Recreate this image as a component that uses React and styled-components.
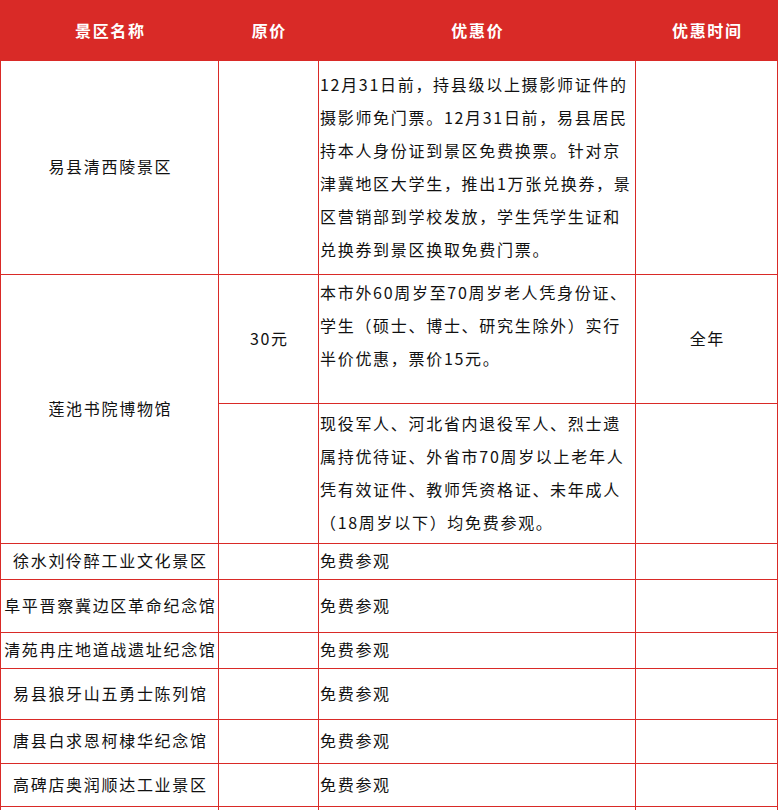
import React from "react";
import styled, { createGlobalStyle } from "styled-components";

const RED = "#d92a27";

const GlobalStyle = createGlobalStyle`
  body {
    margin: 0;
    background: #fff;
    font-family: "Noto Sans CJK SC", "Noto Sans", sans-serif;
  }
`

const Table = styled.div`
  width: 778px;
  display: grid;
  grid-template-columns: 217px 99px 316px 141px;
  grid-template-rows: 59px 213px 128px 139px 35px 52px 35px 50px 43px 42px 40px;
  gap: 1px;
  padding: 1px;
  box-sizing: border-box;
  background: ${RED};
`

const HeadCell = styled.div`
  background: ${RED};
  color: #fff;
  font-size: 16px;
  font-weight: 700;
  letter-spacing: 1.7px;
  display: flex;
  align-items: center;
  justify-content: center;
  padding: 0 0 2px 1.7px;
`

const Cell = styled.div`
  background: #fff;
  color: #111;
  font-size: 16px;
  letter-spacing: 1.7px;
  line-height: 33px;
  display: flex;
  flex-direction: column;
  justify-content: ${(p) => (p.$top ? "flex-start" : "center")};
  align-items: ${(p) => (p.$left ? "flex-start" : "center")};
  padding: ${(p) => (p.$top ? "1px 0 0 1px" : p.$left ? "0 0 2px 1px" : "0 0 2px 1.7px")};
  grid-row: ${(p) => (p.$span ? `span ${p.$span}` : "auto")};
  white-space: nowrap;
`

const Line = styled.span`
  display: block;
`

const heads = ["景区名称", "原价", "优惠价", "优惠时间"];

const Text = ({ lines, ...rest }) => (
  <Cell $left {...rest}>
    {lines.map((l) => (
      <Line key={l}>{l}</Line>
    ))}
  </Cell>
)

const freeSites = [
  "徐水刘伶醉工业文化景区",
  "阜平晋察冀边区革命纪念馆",
  "清苑冉庄地道战遗址纪念馆",
  "易县狼牙山五勇士陈列馆",
  "唐县白求恩柯棣华纪念馆",
  "高碑店奥润顺达工业景区",
];

const App = () => (
  <>
    <GlobalStyle />
    <Table>
      {heads.map((h) => (
        <HeadCell key={h}>{h}</HeadCell>
      ))}

      <Cell>易县清西陵景区</Cell>
      <Cell />
      <Text
        lines={[
          "12月31日前，持县级以上摄影师证件的",
          "摄影师免门票。12月31日前，易县居民",
          "持本人身份证到景区免费换票。针对京",
          "津冀地区大学生，推出1万张兑换券，景",
          "区营销部到学校发放，学生凭学生证和",
          "兑换券到景区换取免费门票。",
        ]}
      />
      <Cell />

      <Cell $span={2}>莲池书院博物馆</Cell>
      <Cell>30元</Cell>
      <Text
        $top
        lines={[
          "本市外60周岁至70周岁老人凭身份证、",
          "学生（硕士、博士、研究生除外）实行",
          "半价优惠，票价15元。",
        ]}
      />
      <Cell>全年</Cell>
      <Cell />
      <Text
        lines={[
          "现役军人、河北省内退役军人、烈士遗",
          "属持优待证、外省市70周岁以上老年人",
          "凭有效证件、教师凭资格证、未年成人",
          "（18周岁以下）均免费参观。",
        ]}
      />
      <Cell />

      {freeSites.map((name) => (
        <React.Fragment key={name}>
          <Cell>{name}</Cell>
          <Cell />
          <Text lines={["免费参观"]} />
          <Cell />
        </React.Fragment>
      ))}

      <Cell />
      <Cell />
      <Cell />
      <Cell />
    </Table>
  </>
)

export default App
